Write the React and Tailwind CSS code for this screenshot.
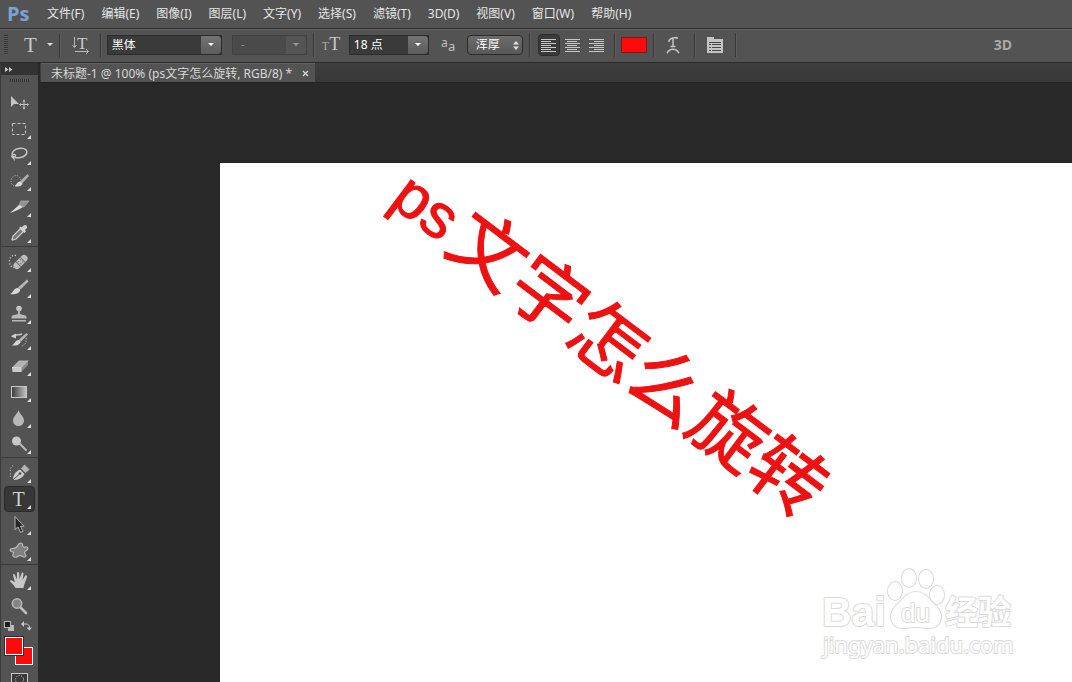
import { useState } from 'react';

const MENUS = [
  '文件(F)', '编辑(E)', '图像(I)', '图层(L)', '文字(Y)', '选择(S)',
  '滤镜(T)', '3D(D)', '视图(V)', '窗口(W)', '帮助(H)',
];

const SERIF = 'Liberation Serif, serif';

// 24x24 drawings, one for each tool
const ICONS = {
  move: (
    <>
      <path d="M4 5v11l3-3h5z" fill="#c4c4c4" />
      <path d="M17 9v9M12.500 13.500h9" stroke="#c4c4c4" />
      <path d="M15.500 10.500 17 8.500l1.500 2zM15.500 16.500 17 18.500l1.500-2zM14 12l-2 1.500 2 1.500zM20 12l2 1.500-2 1.500z" fill="#c4c4c4" />
    </>
  ),
  marquee: <rect x="5.500" y="6.500" width="13" height="11" fill="none" stroke="#c4c4c4" strokeDasharray="3 2" />,
  lasso: (
    <>
      <ellipse cx="12.500" cy="10" rx="7.500" ry="4.700" fill="none" stroke="#c4c4c4" strokeWidth="1.500" transform="rotate(-12 12.500 10)" />
      <path d="M6 12c-2.500 1-1 3.500 1.500 2s.5-3-1.500-2.500M6.500 14c-.5 1.500 1 2 1 3.500" fill="none" stroke="#c4c4c4" strokeWidth="1.200" />
    </>
  ),
  quick: (
    <>
      <ellipse cx="9" cy="12" rx="5" ry="5.500" fill="none" stroke="#c4c4c4" strokeDasharray="1 1.500" />
      <path d="M20.500 5 22 7l-6.500 7-2-2z" fill="#b0b0b0" />
      <path d="M12.500 12.500c2 0 3 1 3 2.500-2 3-5 2.500-8 2 2-1 2.500-4 5-4.500z" fill="#d6d6d6" />
    </>
  ),
  slice: (
    <>
      <path d="M14 6h8l-5 6-5-2z" fill="#929292" stroke="#b0b0b0" strokeWidth=".7" />
      <path d="M12 10l4 2c-3 2-7 4-13 6z" fill="#dddddd" />
    </>
  ),
  eyedropper: (
    <>
      <path d="M5 18.500 6 15l7.500-7.500 3 3L9 18l-3.500 1z" fill="#777" stroke="#d0d0d0" strokeWidth="1.200" />
      <path d="M12 7l1.500-1.500L15 6.500c1-2 3-3.500 4.500-2s0 3.500-1.500 4.500l1 1.500-1.500 1.500z" fill="#d0d0d0" />
    </>
  ),
  heal: (
    <>
      <path d="M9 5.500C5 4.500 2.500 7.500 2.500 11s1 6 4.500 6.500" fill="none" stroke="#d0d0d0" strokeDasharray="1.200 1.800" strokeWidth="1.300" />
      <g transform="rotate(-45 13.500 12)">
        <rect x="5" y="8.500" width="17" height="7" rx="3.500" fill="#bdbdbd" />
        <path d="M10.500 8.500v7M16.500 8.500v7" stroke="#6d6d6d" />
        <path d="M12 10.500h1M14.500 10.500h1M12 13.500h1M14.500 13.500h1" stroke="#555" />
      </g>
    </>
  ),
  brush: (
    <>
      <path d="M20 3.500 21.500 5.500 13.500 13.500 11 11.500z" fill="#b5b5b5" />
      <path d="M10.500 12c2 0 3 1.500 2.500 3-2 3.500-6 3.500-10 3 3-1 3.500-5.500 7.500-6z" fill="#d6d6d6" />
    </>
  ),
  stamp: (
    <>
      <circle cx="12" cy="6.500" r="2.800" fill="#c4c4c4" />
      <path d="M11 8h2v4c2 1 6 .5 6.500 3v1.500h-15V15c.5-2.500 4.500-2 6.500-3zM5 18h14v1.500H5z" fill="#b8b8b8" />
    </>
  ),
  history: (
    <>
      <path d="M5 8.500c4-2.500 7-1 10-2.500" fill="none" stroke="#c8c8c8" strokeWidth="1.500" />
      <path d="M4 8.500 9 5.500v5z" fill="#d0d0d0" />
      <path d="M19.500 5 21 6.500 14 13.500l-2-2z" fill="#b5b5b5" />
      <path d="M11.500 12c2 0 2.500 1 2 2.500-2 3.500-5 3-8.500 3 2.500-1.500 3-5 6.500-5.500z" fill="#d6d6d6" />
      <path d="M19 10c.8 4-1 7-4 8" fill="none" stroke="#c8c8c8" strokeDasharray="1.200 1.500" />
    </>
  ),
  eraser: (
    <>
      <path d="M12 6.500h9l-7 7H5z" fill="#b2b2b2" />
      <path d="M5 13.500h9V18H5.500z" fill="#c9c9c9" />
      <path d="M14 13.500l7-7v4.500L14 18z" fill="#8b8b8b" />
      <path d="M5 13.500h9l7-7M14 13.500V18" fill="none" stroke="#dedede" strokeWidth=".8" />
    </>
  ),
  gradient: (
    <>
      <defs>
        <linearGradient id="ramp">
          <stop stopColor="#3a3a3a" />
          <stop offset="1" stopColor="#c4c4c4" />
        </linearGradient>
      </defs>
      <rect x="4.500" y="6.500" width="15" height="11" fill="url(#ramp)" stroke="#c8c8c8" />
    </>
  ),
  blur: <path d="M11.500 4c1 4 5.500 6.500 5.500 10.500a5.500 5.500 0 0 1-11 0C6 10.500 10.500 8 11.500 4z" fill="#b8b8b8" />,
  dodge: (
    <>
      <path d="M13 12l6 6" stroke="#b5b5b5" strokeWidth="2.200" strokeLinecap="round" />
      <circle cx="9.500" cy="9" r="4.500" fill="#c8c8c8" />
    </>
  ),
  pen: (
    <>
      <path d="M6 4.500c-2.500 1.500-3 4-2.500 7s0 4-.5 6" fill="none" stroke="#c4c4c4" strokeDasharray="1 1.800" />
      <path d="M6 19c0-4 1.500-8 7-10.500l4.500 4.500C15.500 17 11 19 6 19z" fill="#cacaca" />
      <path d="M14 7.500 17.500 3.500l5 5-4 3.500z" fill="#b3b3b3" />
      <path d="M6 19l6.500-6" stroke="#505050" />
      <circle cx="13" cy="12.500" r="1.300" fill="#505050" />
    </>
  ),
  select: <path d="M8 3.500v13l3-2.500 2.500 5.500 2.500-1.200-2.500-5H17z" fill="#262626" stroke="#b5b5b5" />,
  shape: (
    <path
      d="M11 6c1-2.500 4-2.500 4.500-.5 0 2 .5 3 3 2.500 3-.5 3 2.500 1 3.500-2.500 1.200-2.500 2-1 4s-1 3.500-3 2-3-1.500-5 0-5.500.5-4.500-2 .5-2.500-1.500-3-2-3 .5-3S10 9 11 6z"
      fill="#808080"
      stroke="#b8b8b8"
      strokeWidth="1.200"
    />
  ),
  hand: (
    <path
      d="M8.500 20c-1.500-2.500-3-4.500-5-6-1-1.500.5-2.200 2-1.200l2.500 1.700L6 7.500c-.3-1.500 1.500-2 2-.5l1.800 4.500L10 5c0-1.500 2-1.500 2.200 0l.3 6.200L14.500 5.500c.5-1.500 2.200-1 2 .5L15.500 12l2.500-4c.8-1.300 2.500-.5 2 1l-3 8.500-.5 2.500z"
      fill="#c8c8c8"
    />
  ),
  zoom: (
    <>
      <path d="M13.500 13.500l5.500 5.500" stroke="#bdbdbd" strokeWidth="2.600" strokeLinecap="round" />
      <circle cx="10" cy="9.500" r="4.700" fill="#858585" stroke="#b8b8b8" strokeWidth="1.500" />
    </>
  ),
};

const TOOL_GROUPS = [
  [
    ['move', '移动工具'], ['marquee', '矩形选框工具'], ['lasso', '套索工具'],
    ['quick', '快速选择工具'], ['slice', '切片工具'], ['eyedropper', '吸管工具'],
  ],
  [
    ['heal', '污点修复画笔工具'], ['brush', '画笔工具'], ['stamp', '仿制图章工具'],
    ['history', '历史记录画笔工具'], ['eraser', '橡皮擦工具'], ['gradient', '渐变工具'],
    ['blur', '模糊工具'], ['dodge', '减淡工具'],
  ],
  [['pen', '钢笔工具'], ['type', '横排文字工具'], ['select', '路径选择工具'], ['shape', '自定形状工具']],
  [['hand', '抓手工具'], ['zoom', '缩放工具']],
];

const NO_FLYOUT = ['move', 'zoom'];

const Divider = ({ className }) => (
  <div className={`h-6 w-px shrink-0 bg-[#383838] shadow-[1px_0_0_#5e5e5e] ${className}`} />
);

const Dropdown = ({ label, options, disabled, className }) => (
  <div className={`relative h-5 shrink-0 ${className}`}>
    <select
      aria-label={label}
      disabled={disabled}
      className="block h-full w-full appearance-none border border-[#2c2c2c] bg-[#3a3a3a] pl-1 text-xs leading-none text-white disabled:border-[#414141] disabled:bg-[#4a4a4a] disabled:pl-2 disabled:text-[#888888]"
    >
      {options.map((o) => <option key={o}>{o}</option>)}
    </select>
    <span
      className={`pointer-events-none absolute inset-y-px right-px flex w-5 items-center justify-center rounded-r-sm ${
        disabled ? 'bg-[#555555] text-[#999999]' : 'bg-linear-to-b from-[#737373] to-[#5c5c5c] text-white'
      }`}
    >
      <svg width="6" height="3"><path d="M0 0h6L3 3z" fill="currentColor" /></svg>
    </span>
  </div>
);

const AlignButton = ({ label, align, active, onClick }) => {
  const rows = [15, 10, 15, 10, 15, 10];
  return (
    <button
      type="button"
      aria-label={label}
      onClick={onClick}
      className={`flex h-[22px] w-[22px] items-center justify-center rounded-sm border ${
        active ? 'border-[#2c2c2c] bg-[#3a3a3a]' : 'border-transparent'
      }`}
    >
      <svg width="15" height="14" shapeRendering="crispEdges">
        {rows.map((w, i) => {
          const x = align === 'left' ? 0 : align === 'right' ? 15 - w : Math.floor((15 - w) / 2);
          return <rect key={i} x={x} y={1 + i * 2} width={w} height="1" fill="#c8c8c8" />;
        })}
        <rect x="0" y="13" width="15" height="1" fill="#c8c8c8" />
      </svg>
    </button>
  );
};

const OptionsBar = () => {
  const [align, setAlign] = useState('left');

  return (
    <div className="flex h-[35px] shrink-0 items-center border-t border-b border-t-[#2e2e2e] border-b-[#2a2a2a] bg-[#535353] pb-0.5 shadow-[inset_0_1px_0_#626262]">
      <div className="ml-1 h-5 w-1 bg-[repeating-linear-gradient(to_bottom,#333_0_1px,#5c5c5c_1px_2px)]" />
      <button type="button" aria-label="工具预设" className="ml-4 flex items-center gap-2.5 text-[#c8c8c8]">
        <span className="font-['Liberation_Serif',serif] text-[21px] leading-6">T</span>
        <svg width="6" height="3"><path d="M0 0h6L3 3z" fill="#e0e0e0" /></svg>
      </button>
      <Divider className="ml-1.5" />
      <button type="button" aria-label="切换文本取向" className="ml-3">
        <svg width="18" height="24" fill="none" stroke="#b8b8b8">
          <text x="5" y="16" fontSize="17" fontFamily={SERIF} fill="#c8c8c8" stroke="none">T</text>
          <path d="M2.500 4v10M.5 12l2 2.500 2-2.500M3 18.500h13M14 16l2.500 2.500L14 21" />
        </svg>
      </button>
      <Divider className="ml-2.5" />
      <Dropdown label="字体" options={['黑体', '宋体']} className="ml-1.5 w-[115px]" />
      <Dropdown label="字体样式" options={['-']} disabled className="ml-2.5 w-[75px]" />
      <Divider className="ml-1.5" />
      <div className="ml-2 flex w-[19px] shrink-0 items-baseline font-['Liberation_Serif',serif] leading-6">
        <span className="text-xs leading-6 text-[#a8a8a8]">T</span>
        <span className="text-lg leading-6 text-[#c8c8c8]">T</span>
      </div>
      <Dropdown label="字体大小" options={['18 点', '24 点', '36 点']} className="ml-2 w-20" />
      <svg className="ml-3 shrink-0" width="14" height="24">
        <text x="0" y="14" fontSize="12" fontFamily="Noto Sans, sans-serif" fill="#c0c0c0">a</text>
        <text x="7" y="18" fontSize="13" fontFamily="Noto Sans, sans-serif" fill="#c0c0c0">a</text>
      </svg>
      <div className="relative ml-3 h-5 w-14 shrink-0">
        <select
          aria-label="消除锯齿方法"
          className="block h-full w-full appearance-none rounded-sm border border-[#2c2c2c] bg-linear-to-b from-[#6c6c6c] to-[#585858] pl-2 text-xs leading-none text-white"
        >
          <option>浑厚</option>
          <option>锐利</option>
          <option>平滑</option>
        </select>
        <svg className="pointer-events-none absolute top-1.5 right-1" width="6" height="9" fill="#e0e0e0">
          <path d="M0 3.500h6L3 0zM0 5.500h6L3 9z" />
        </svg>
      </div>
      <Divider className="ml-1.5" />
      <div className="ml-2 flex gap-0.5">
        <AlignButton label="左对齐文本" align="left" active={align === 'left'} onClick={() => setAlign('left')} />
        <AlignButton label="居中对齐文本" align="center" active={align === 'center'} onClick={() => setAlign('center')} />
        <AlignButton label="右对齐文本" align="right" active={align === 'right'} onClick={() => setAlign('right')} />
      </div>
      <Divider className="ml-1.5" />
      <button type="button" aria-label="文本颜色" className="ml-1.5 h-4 w-[26px] border border-[#7a1a1a] bg-[#ff0a0a]" />
      <Divider className="ml-1.5" />
      <button type="button" aria-label="创建文字变形" className="ml-3">
        <svg width="14" height="18" fill="none" stroke="#c4c4c4" strokeWidth="1.500">
          <path d="M3 4.500C5 2 8 1.500 11 1.500M3 4v2M11 1v2M7 2.500V10M4.500 10.500h5M1 17c3-5 9-5 12 0" />
        </svg>
      </button>
      <Divider className="ml-3.5" />
      <button type="button" aria-label="切换字符和段落面板" className="ml-3">
        <svg width="16" height="16" shapeRendering="crispEdges">
          <path d="M0 0h7v2h9v14H0z" fill="#c4c4c4" />
          <path d="M2 5.500h12M2 7.500h2M5 7.500h9M2 10.500h2M5 10.500h9M2 13.500h2M5 13.500h9" stroke="#484848" />
        </svg>
      </button>
      <Divider className="ml-3" />
      <button type="button" className="mr-15 ml-auto font-['Open_Sans','Noto_Sans',sans-serif] text-sm font-bold text-[#a8a8a8]">3D</button>
    </div>
  );
};

const ToolBox = () => {
  const [tool, setTool] = useState('type');

  return (
    <aside className="flex w-10 shrink-0 flex-col overflow-hidden border-r-2 border-l border-r-[#2a2a2a] border-l-[#3a3a3a] bg-[#535353]">
      <button type="button" aria-label="折叠面板" className="flex h-3 shrink-0 items-center bg-[#333333] pl-1">
        <svg width="8" height="5" fill="#c8c8c8"><path d="M0 0l3.500 2.500L0 5zM4 0l3.500 2.500L4 5z" /></svg>
      </button>
      <div className="mx-auto mt-1 h-[3px] w-5 shrink-0 bg-[repeating-linear-gradient(to_right,#2e2e2e_0_1px,#5c5c5c_1px_2px)]" />
      <div className="mt-2 flex shrink-0 flex-col">
        {TOOL_GROUPS.map((group, gi) => (
          <div key={gi} className={`flex flex-col items-center ${gi > 0 ? 'border-t border-[#3a3a3a] pt-0.5' : ''}`}>
            {group.map(([id, label]) => (
              <button
                key={id}
                type="button"
                aria-label={label}
                onClick={() => setTool(id)}
                className={`relative flex h-[26px] w-[31px] items-center justify-center rounded-sm border pr-0.5 ${
                  tool === id ? 'border-[#2a2a2a] bg-[#373737]' : 'border-transparent'
                }`}
              >
                {id === 'type' ? (
                  <span className="font-['Liberation_Serif',serif] text-xl leading-6 text-[#d0d0d0]">T</span>
                ) : (
                  <svg width="24" height="24" viewBox="0 0 24 24">{ICONS[id]}</svg>
                )}
                {!NO_FLYOUT.includes(id) && (
                  <svg className="absolute right-[3px] bottom-0.5" width="4" height="4"><path d="M4 0v4H0z" fill="#e0e0e0" /></svg>
                )}
              </button>
            ))}
          </div>
        ))}
      </div>

      {/* Foreground / background colours */}
      <div className="mt-0.5 flex shrink-0 justify-between pr-1.5 pl-[3px]">
        <button type="button" aria-label="默认前景色和背景色">
          <svg width="10" height="10">
            <rect x="4" y="4" width="6" height="6" fill="#b8b8b8" />
            <rect x=".5" y=".5" width="6" height="6" fill="#1c1c1c" stroke="#b8b8b8" />
          </svg>
        </button>
        <button type="button" aria-label="切换前景色和背景色">
          <svg width="11" height="10" fill="none" stroke="#c8c8c8">
            <path d="M2 3h3c2 0 3.500 1 3.500 4" />
            <path d="M0 3l3-3v6zM5.500 6.500h5.500l-2.700 3z" fill="#c8c8c8" stroke="none" />
          </svg>
        </button>
      </div>
      <div className="relative mt-1.5 ml-1 h-7 w-7 shrink-0">
        <button type="button" aria-label="背景色" className="absolute right-0 bottom-0 h-[18px] w-[18px] border border-white bg-[#ff0a0a]" />
        <button type="button" aria-label="前景色" className="absolute top-0 left-0 h-[18px] w-[18px] border border-white bg-[#ff0a0a] shadow-[0_0_0_1px_#2c2c2c]" />
      </div>
      <button type="button" aria-label="以快速蒙版模式编辑" className="mx-auto mt-2 shrink-0">
        <svg width="17" height="13">
          <rect x=".5" y=".5" width="16" height="12" fill="#3a3a3a" stroke="#c8c8c8" />
          <circle cx="8.500" cy="6.500" r="4" fill="none" stroke="#d8d8d8" strokeDasharray="1 1.500" />
        </svg>
      </button>
    </aside>
  );
};

const Watermark = () => (
  <svg
    className="absolute top-[397px] left-[590px]"
    width="220"
    height="110"
    fill="#fff"
    stroke="#dadada"
    strokeWidth="2"
    strokeLinejoin="round"
    paintOrder="stroke"
  >
    <text x="12" y="66" fontSize="41" fontWeight="700" fontFamily="Liberation Sans, sans-serif">Bai</text>
    <g>
      <ellipse cx="85" cy="31" rx="7" ry="9" />
      <ellipse cx="99" cy="18" rx="7" ry="9" />
      <ellipse cx="116" cy="19" rx="7" ry="9" />
      <ellipse cx="127" cy="35" rx="7" ry="9" />
      <path d="M106 32c10 0 13 8 20 14 9 9 5 22-7 22-5 0-8-1-13-1s-8 1-13 1c-12 0-16-13-7-22 7-6 10-14 20-14z" />
    </g>
    <text x="91" y="62" fontSize="26" fontFamily="Liberation Sans, sans-serif">du</text>
    <text x="135" y="64" fontSize="33" fontWeight="700" fontFamily="Noto Sans CJK SC, sans-serif">经验</text>
    <text x="13" y="93" fontSize="22" fontFamily="Noto Sans, sans-serif">jingyan.baidu.com</text>
  </svg>
);

const Document = () => (
  <main className="flex min-w-0 flex-1 flex-col">
    <div className="flex h-[19px] shrink-0 bg-linear-to-b from-[#3e3e3e] to-[#383838] pl-px">
      <div className="flex items-center gap-2.5 bg-[#535353] pt-0.5 pr-1.5 pl-2.5 text-xs text-[#d8d8d8] shadow-[inset_0_1px_0_#626262]">
        <span className="whitespace-nowrap">未标题-1 @ 100% (ps文字怎么旋转, RGB/8) *</span>
        <button type="button" aria-label="关闭">
          <svg width="7" height="7" stroke="#d8d8d8" strokeWidth="1.300"><path d="M1 1l5 5M6 1L1 6" /></svg>
        </button>
      </div>
    </div>
    <div className="flex flex-1 overflow-hidden border-t border-[#222222] bg-[#282828] pt-20 pl-[180px]">
      <div className="relative flex-1 overflow-hidden bg-white">
        <p className="absolute top-[120px] left-[128px] w-[530px] rotate-37 text-center font-['Noto_Sans_CJK_SC',sans-serif] text-[75px] leading-[110px] whitespace-nowrap text-[#ee1111] [-webkit-text-stroke:1px_#ee1111]">
          <span className="mr-1.5 align-[4px] font-['Liberation_Sans',sans-serif] text-[62px] leading-[72px]">ps</span>
          文字怎么旋转
        </p>
        <Watermark />
      </div>
    </div>
  </main>
);

export default function App() {
  return (
    <div className="flex h-screen flex-col overflow-hidden bg-[#282828] font-['Noto_Sans','Noto_Sans_CJK_SC',sans-serif]">
      <header className="flex h-7 shrink-0 items-center bg-[#535353]">
        <span className="ml-[7px] w-10 font-['Open_Sans','Noto_Sans',sans-serif] text-xl leading-7 font-bold text-[#79a3d0]">Ps</span>
        <nav className="flex gap-[17px] text-xs text-[#e6e6e6]">
          {MENUS.map((m) => (
            <button key={m} type="button" className="whitespace-nowrap">{m}</button>
          ))}
        </nav>
      </header>
      <OptionsBar />
      <div className="flex min-h-0 flex-1">
        <ToolBox />
        <Document />
      </div>
    </div>
  );
}
